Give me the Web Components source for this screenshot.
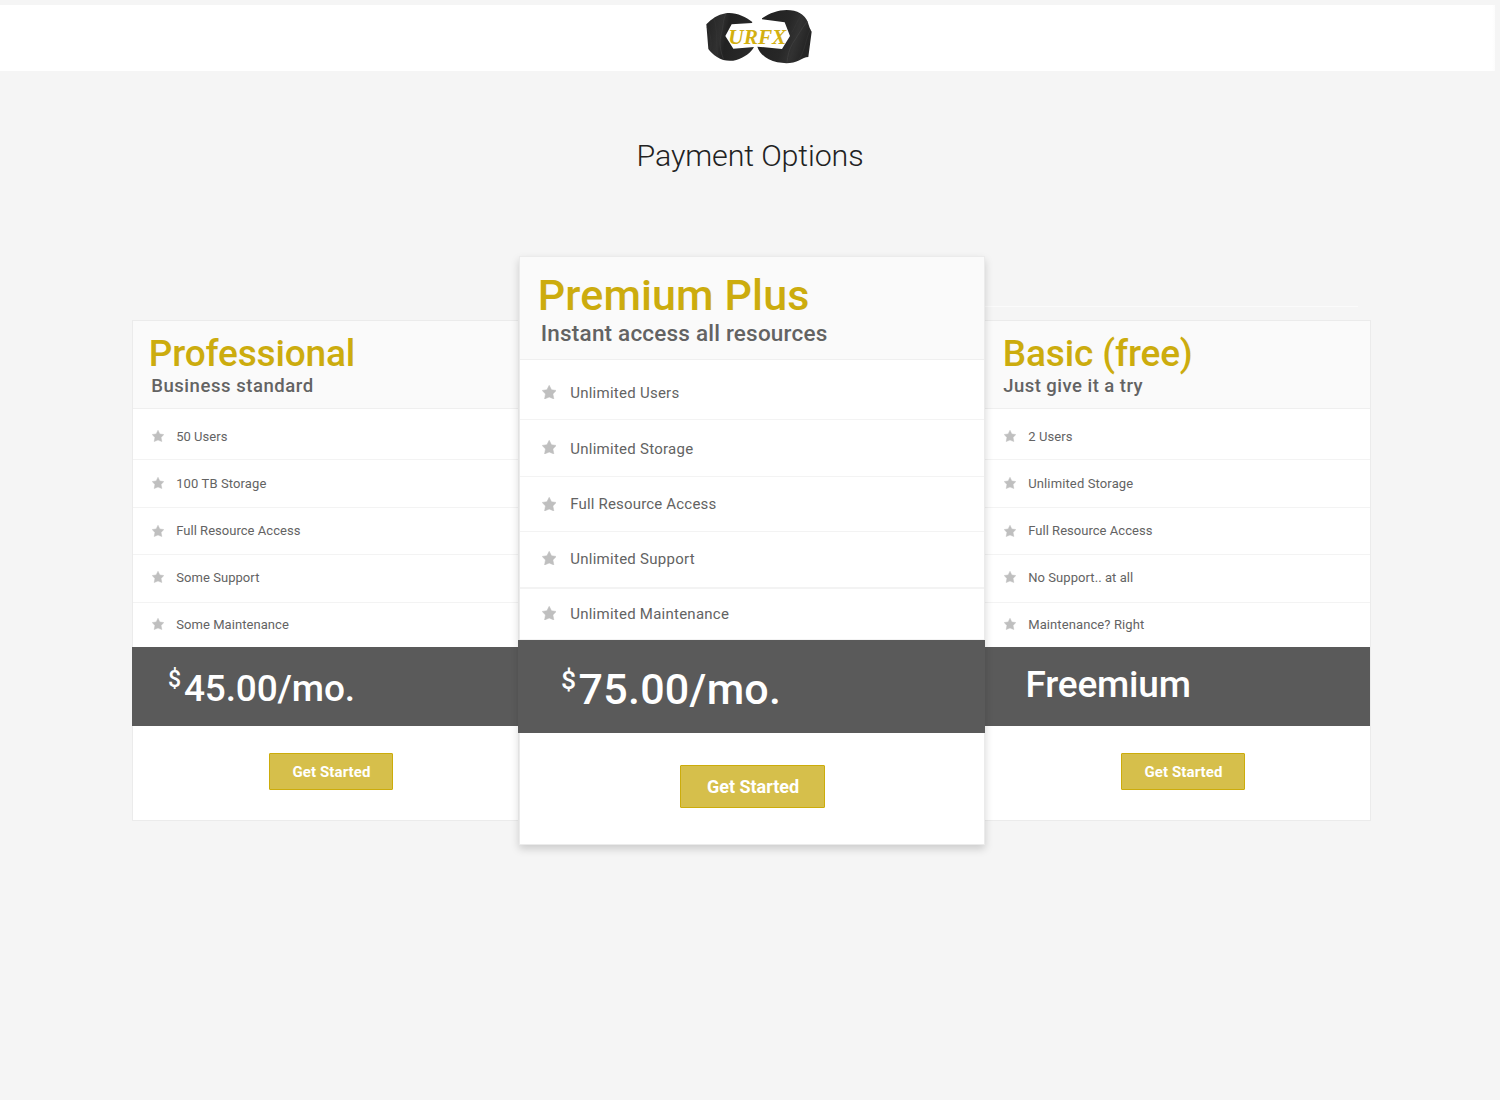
<!DOCTYPE html>
<html lang="en">
<head>
<meta charset="utf-8">
<title>Payment Options</title>
<style>
body{margin:0;background:#f5f5f5;font-family:Roboto,"Liberation Sans",sans-serif;height:1100px;overflow:hidden}
</style>
</head>
<body>
<payment-page></payment-page>
<script>
const shadow = (el, html) => { const r = el.attachShadow({mode:'open'}); r.innerHTML = html; return r; };

// A single line of text tracked to fill a given advance width.
customElements.define('tracked-text', class extends HTMLElement {
  connectedCallback() {
    if (this.shadowRoot) return;
    const r = shadow(this, `<style>:host{display:block;white-space:nowrap}span{display:inline-block}</style><span>${this.getAttribute('text')}</span>`);
    const s = r.querySelector('span');
    const w = parseFloat(this.getAttribute('width'));
    const n = this.getAttribute('text').length - 1;
    s.style.letterSpacing = ((w - s.getBoundingClientRect().width) / n) + 'px';
  }
});

customElements.define('star-icon', class extends HTMLElement {
  connectedCallback() {
    shadow(this, `<style>:host{display:block}svg{display:block;width:100%;height:100%}</style>
    <svg viewBox="0 0 14 14"><path fill="#bfbfbf" stroke="#bfbfbf" stroke-width=".5" stroke-linejoin="round" d="M7 .3 9.2 4.6 13.8 5.3 10.6 8.7 11.5 13.5 7 11.7 2.5 13.5 3.4 8.7 .2 5.3 4.8 4.6Z"/></svg>`);
  }
});

customElements.define('urfx-logo', class extends HTMLElement {
  connectedCallback() {
    shadow(this, `<style>:host{display:block;width:140px;height:66px}svg{display:block}</style>
    <svg width="140" height="66" viewBox="0 15 420 198">
      <defs>
        <linearGradient id="a" x1="0" x2="1" y2=".2"><stop offset="0" stop-color="#232323"/><stop offset=".35" stop-color="#303030"/><stop offset=".5" stop-color="#222"/><stop offset="1" stop-color="#292929"/></linearGradient>
        <linearGradient id="b" x1="0" x2="1" y2=".3"><stop offset="0" stop-color="#202020"/><stop offset=".6" stop-color="#272727"/><stop offset=".8" stop-color="#323232"/><stop offset="1" stop-color="#252525"/></linearGradient>
      </defs>
      <path fill="url(#a)" d="M49 73C64 58 82 44 108 40C136 36 166 50 187 66L186 69L125 73L106 108L130 146L192 141C184 158 162 173 139 180C120 185 99 183 81 171C70 164 62 156 55 147Z"/>
      <path fill="none" stroke="#3e3e3e" stroke-width="2" d="M108 41C97 64 101 78 94 101C88 123 88 145 101 179"/>
      <path fill="none" stroke="#363636" stroke-width="1.5" d="M72 57C84 87 76 128 84 171M51 82C62 100 66 128 61 151"/>
      <path fill="url(#b)" d="M216 55C239 39 265 30 290 30C322 30 345 44 353 65C357 78 360 88 365 95L355 171C345 171 339 175 328 181C310 191 285 191 262 187C233 181 210 164 202 140L276 147L300 108L284 67L216 58Z"/>
      <path fill="none" stroke="#424242" stroke-width="2" d="M352 64C332 88 322 111 308 130C297 148 293 168 291 187"/>
      <path fill="none" stroke="#383838" stroke-width="1.5" d="M361 88C346 120 347 147 326 181M335 43C320 65 315 82 305 98"/>
      <text x="115" y="132" textLength="174" lengthAdjust="spacingAndGlyphs" font-family="'Liberation Serif',serif" font-style="italic" font-weight="700" font-size="63" fill="#d3b010">URFX</text>
    </svg>`);
  }
});

customElements.define('site-header', class extends HTMLElement {
  connectedCallback() {
    shadow(this, `<style>:host{display:flex;box-sizing:border-box;margin-top:5px;width:1495px;height:66px;padding-left:690px;background:linear-gradient(90deg,#fff 1492px,#fcfcfc)}</style><slot></slot>`);
  }
});

customElements.define('feature-row', class extends HTMLElement {
  connectedCallback() {
    const a = n => this.getAttribute(n);
    shadow(this, `<style>
      :host{display:flex;box-sizing:border-box;align-items:flex-start;height:${a('h')}px;padding:${a('pad')}px 0 0 var(--row-x);border-bottom:${a('line')}px solid #f3f3f3}
      star-icon{width:var(--star);height:var(--star);margin:${a('star')}px var(--star-gap) 0 0}
      tracked-text{font-size:var(--row-size);line-height:var(--row-line);color:#636363}
    </style><star-icon></star-icon><tracked-text text="${a('text')}" width="${a('w')}"></tracked-text>`);
  }
});

customElements.define('start-button', class extends HTMLElement {
  connectedCallback() {
    shadow(this, `<style>
      :host{display:block}
      button{display:flex;box-sizing:border-box;align-items:center;justify-content:center;width:var(--btn-w);height:var(--btn-h);margin:0 0 0 var(--btn-x);padding:0 0 0 1px;border:1px solid #ccac0b;border-radius:1px;background:#d6bf4b;color:#fff;font:700 var(--btn-size)/20px Roboto,sans-serif}
    </style><button><tracked-text text="Get Started" width="${this.getAttribute('w')}"></tracked-text></button>`);
  }
});

customElements.define('plan-card', class extends HTMLElement {
  connectedCallback() {
    shadow(this, `<style>
      :host{display:block;box-sizing:border-box;width:386px;height:501px;background:#fff;border:1px solid #ebebeb;
        --row-x:19px;--star:12px;--star-gap:12.2px;--row-size:13px;--row-line:16px;--btn-w:124px;--btn-h:37px;--btn-x:136px;--btn-size:15px;
        --head-h:88px;--bar-h:79px;--bar-m:0 0 0 -1px;--btn-top:27px}
      :host([side=left]){border-right:0}
      :host([side=right]){border-left:0;--bar-m:0}
      :host([featured]){position:relative;z-index:1;width:466px;height:589px;margin-left:1px;box-shadow:0 4px 8px rgba(0,0,0,.17);
        --row-x:22px;--star:14.4px;--star-gap:13.8px;--row-size:15px;--row-line:18px;--btn-w:145px;--btn-h:43px;--btn-x:160px;--btn-size:18px;
        --head-h:103px;--bar-h:93px;--bar-m:0 -1px 0 -2px;--btn-top:32px}
      .head{box-sizing:border-box;height:var(--head-h);background:#fafafa;border-bottom:1px solid #efefef}
      .bar{height:var(--bar-h);margin:var(--bar-m);background:#5a5a5a;overflow:hidden}
      .cta{padding-top:var(--btn-top)}
    </style>
    <div class="head"><slot name="head"></slot></div>
    <slot></slot>
    <div class="bar"><slot name="price"></slot></div>
    <div class="cta"><slot name="cta"></slot></div>`);
  }
});

customElements.define('plan-head', class extends HTMLElement {
  connectedCallback() {
    const a = n => this.getAttribute(n);
    shadow(this, `<style>
      :host{display:flex;flex-direction:column;padding:11px 0 0 ${a('x')}px}
      .t{font-size:37px;line-height:44px;font-weight:500;color:#ccac0e}
      .s{font-size:18.5px;line-height:20px;font-weight:500;color:#636363;padding-left:${a('sx')}px}
      :host([big]){padding-top:13px}
      :host([big]) .t{font-size:43px;line-height:50px}
      :host([big]) .s{font-size:22.5px;line-height:27px}
    </style>
    <tracked-text class="t" text="${a('name')}" width="${a('w')}"></tracked-text>
    <tracked-text class="s" text="${a('sub')}" width="${a('sw')}"></tracked-text>`);
  }
});

customElements.define('plan-price', class extends HTMLElement {
  connectedCallback() {
    const a = n => this.getAttribute(n);
    shadow(this, `<style>
      :host{display:flex;align-items:flex-start;color:#fff;font-weight:500;padding-left:${a('x')}px}
      .c{font-size:${a('csize')}px;line-height:28px;width:${a('cw')}px;margin-top:${a('ctop')}px}
      .v{font-size:${a('size')}px;line-height:50px;margin-top:${a('top')}px}
    </style>
    ${a('cw') ? '<span class="c">$</span>' : ''}<tracked-text class="v" text="${a('text')}" width="${a('w')}"></tracked-text>`);
  }
});

const rows = list => list.map(([text,w,h,pad,star,line]) =>
  `<feature-row text="${text}" w="${w}" h="${h}" pad="${pad}" star="${star}" line="${line}"></feature-row>`).join('');

customElements.define('payment-page', class extends HTMLElement {
  connectedCallback() {
    shadow(this, `<style>
      :host{display:flex;flex-direction:column}
      h1{display:flex;justify-content:center;margin:65px 0 0;font-size:30.4px;line-height:40px;font-weight:300;color:#222}
      .plans{display:flex;padding:80px 0 0 132px}
      .left{margin-top:64px}
      .right{margin-top:50px}
      .rule{width:373px;height:1px;background:#fbfbfb;margin-bottom:13px}
    </style>
    <site-header><urfx-logo></urfx-logo></site-header>
    <h1><tracked-text text="Payment Options" width="227"></tracked-text></h1>
    <div class="plans">
      <plan-card side="left" class="left">
        <plan-head slot="head" name="Professional" w="206.5" x="15.8" sub="Business standard" sw="162" sx="2.4"></plan-head>
        ${rows([['50 Users',51.2,51,20,1,1],['100 TB Storage',90.2,48,16,1,1],['Full Resource Access',124.2,47,15,2,1],['Some Support',83.2,48,15,1,1],['Some Maintenance',112.7,44,14,1,0]])}
        <plan-price slot="price" x="36" csize="23" cw="16" ctop="19" size="37" top="17" text="45.00/mo." w="171"></plan-price>
        <start-button slot="cta" w="78"></start-button>
      </plan-card>
      <plan-card featured>
        <plan-head slot="head" big name="Premium Plus" w="271.5" x="17.8" sub="Instant access all resources" sw="286.5" sx="3"></plan-head>
        ${rows([['Unlimited Users',109,60,24,1,1],['Unlimited Storage',123,57,20,0,1],['Full Resource Access',146,55,18,2,1],['Unlimited Support',124.5,57,18,1,2],['Unlimited Maintenance',158.7,51,16,1,1]])}
        <plan-price slot="price" x="43" csize="26.5" cw="17.5" ctop="26" size="43" top="24" text="75.00/mo." w="202.5"></plan-price>
        <start-button slot="cta" w="92"></start-button>
      </plan-card>
      <div class="right">
        <div class="rule"></div>
        <plan-card side="right">
          <plan-head slot="head" name="Basic (free)" w="190" x="17.8" sub="Just give it a try" sw="139.5" sx=".4"></plan-head>
          ${rows([['2 Users',44.2,51,20,1,1],['Unlimited Storage',105,48,16,1,1],['Full Resource Access',124.2,47,15,2,1],['No Support.. at all',105,48,15,1,1],['Maintenance? Right',116,44,14,1,0]])}
          <plan-price slot="price" x="40.6" size="37" top="13" text="Freemium" w="165.3"></plan-price>
          <start-button slot="cta" w="78"></start-button>
        </plan-card>
      </div>
    </div>`);
  }
});
</script>
</body>
</html>
